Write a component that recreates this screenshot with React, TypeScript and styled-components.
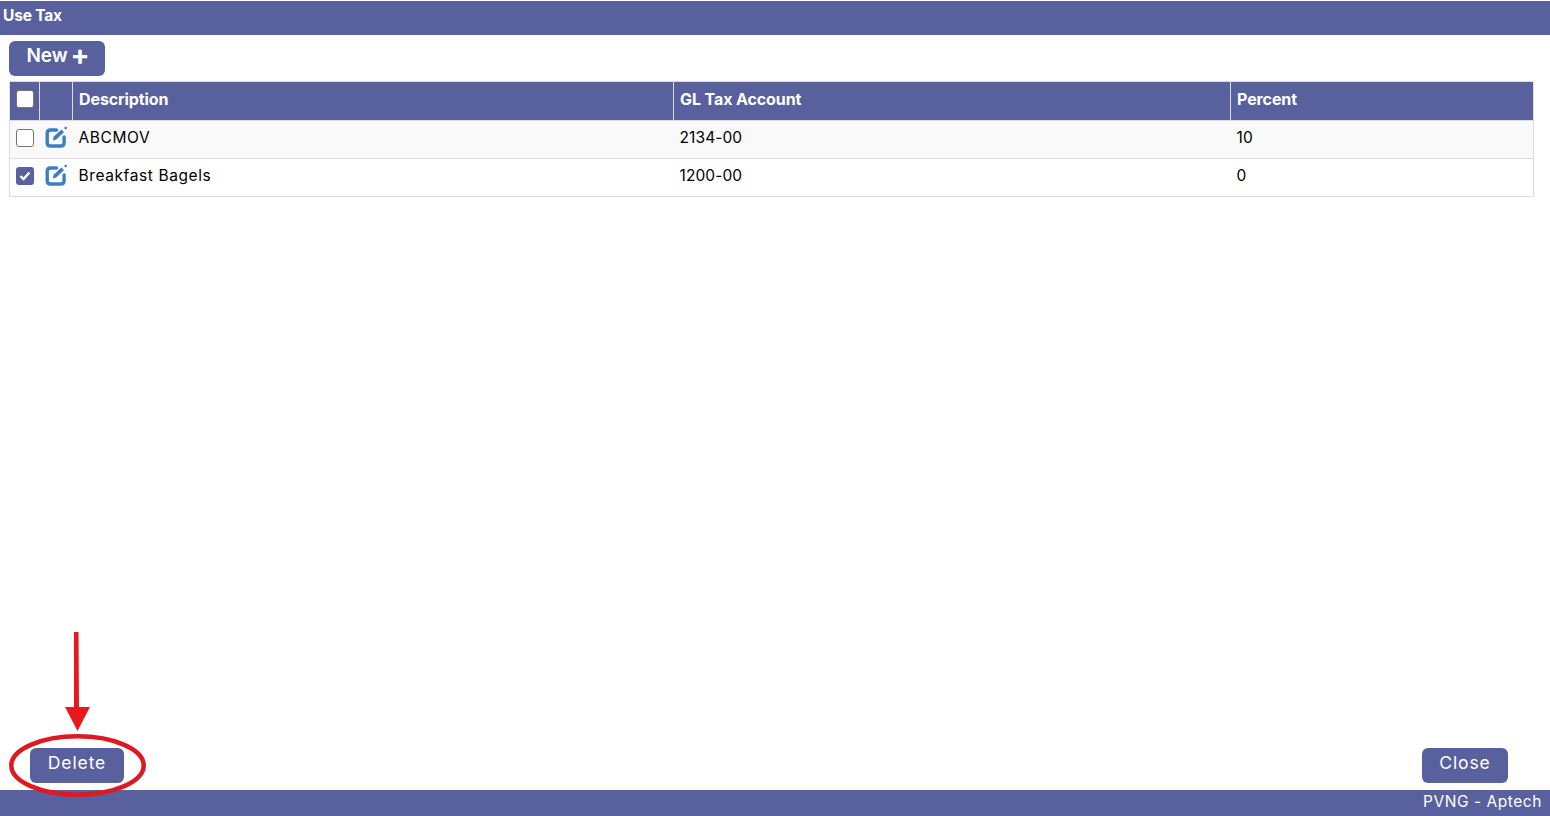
import { createGlobalStyle } from "styled-components";
import styled from "styled-components";

const PRIMARY = "#58619d";

interface ITax {
  description: string;
  account: string;
  percent: string;
  checked: boolean;
}

const taxes: ITax[] = [
  { description: "ABCMOV", account: "2134-00", percent: "10", checked: false },
  { description: "Breakfast Bagels", account: "1200-00", percent: "0", checked: true },
];

function EditIcon() {
  return (
    <svg width="24" height="22" viewBox="0 0 24 22" fill="none">
      <path
        d="M11.5 4H5.5C3.4 4 2.2 5.2 2.2 7.3V16.7C2.2 18.8 3.4 20 5.5 20H15.8C17.9 20 19.1 18.8 19.1 16.7V11"
        stroke="#3a80c1"
        strokeWidth="3.4"
        strokeLinecap="round"
      />
      <path d="M8.5 10.8L16.5 3.6L19 6.2L11.2 13.6L8 14.4Z" fill="#3a80c1" />
      <path d="M19.8 0.6L22.2 1.4L21.4 3.6L19.4 2.8Z" fill="#3a80c1" />
    </svg>
  );
}

function CheckBox({ checked }: { checked: boolean }) {
  return (
    <StyledBox $checked={checked}>
      {checked && (
        <svg width="12" height="10" viewBox="0 0 12 10" fill="none">
          <path d="M1.5 5L4.5 8L10.5 1.5" stroke="#fff" strokeWidth="2.4" />
        </svg>
      )}
    </StyledBox>
  );
}

function App() {
  return (
    <StyledPage>
      <GlobalStyle />
      <StyledTitleBar>Use Tax</StyledTitleBar>
      <StyledMain>
        <StyledNewButton>
          New <StyledPlus>+</StyledPlus>
        </StyledNewButton>
        <StyledTable>
          <colgroup>
            <col style={{ width: 30 }} />
            <col style={{ width: 33 }} />
            <col style={{ width: 601 }} />
            <col style={{ width: 557 }} />
            <col />
          </colgroup>
          <thead>
            <tr>
              <StyledTh>
                <StyledBoxCell>
                  <CheckBox checked={false} />
                </StyledBoxCell>
              </StyledTh>
              <StyledTh />
              <StyledTh>Description</StyledTh>
              <StyledTh>GL Tax Account</StyledTh>
              <StyledTh>Percent</StyledTh>
            </tr>
          </thead>
          <tbody>
            {taxes.map((each, index) => (
              <StyledRow key={index} $odd={index % 2 === 0}>
                <StyledTd>
                  <StyledBoxCell>
                    <CheckBox checked={each.checked} />
                  </StyledBoxCell>
                </StyledTd>
                <StyledIconTd>
                  <EditIcon />
                </StyledIconTd>
                <StyledTd>{each.description}</StyledTd>
                <StyledNumberTd>{each.account}</StyledNumberTd>
                <StyledNumberTd>{each.percent}</StyledNumberTd>
              </StyledRow>
            ))}
          </tbody>
        </StyledTable>
        <StyledActions>
          <StyledDeleteWrap>
            <StyledArrow width="30" height="102" viewBox="0 0 30 102">
              <path d="M11 1H15.5L16 76H27L14.5 100L2 76H11Z" fill="#e8191e" />
            </StyledArrow>
            <StyledRing width="140" height="66" viewBox="0 0 140 66" fill="none">
              <ellipse cx="69.5" cy="32.5" rx="66.2" ry="29.2" stroke="#dc1a22" strokeWidth="4.5" />
            </StyledRing>
            <StyledButton $width={94}>Delete</StyledButton>
          </StyledDeleteWrap>
          <StyledButton $width={86}>Close</StyledButton>
        </StyledActions>
      </StyledMain>
      <StyledFooter>PVNG - Aptech</StyledFooter>
    </StyledPage>
  );
}

export default App;

const GlobalStyle = createGlobalStyle`
  body {
    margin: 0;
    background: #fff;
    font-family: Inter, "Noto Sans", "Liberation Sans", sans-serif;
    color: #000;
  }
`;

const StyledPage = styled.div`
  height: 816px;
  padding-top: 1px;
  box-sizing: border-box;
  display: flex;
  flex-direction: column;
  overflow: hidden;
`;

const StyledTitleBar = styled.div`
  height: 34px;
  line-height: 30px;
  padding-left: 3px;
  background: ${PRIMARY};
  color: #fff;
  font-size: 15.5px;
  font-weight: 700;
  letter-spacing: -0.2px;
`;

const StyledMain = styled.div`
  flex: 1;
  display: flex;
  flex-direction: column;
  align-items: flex-start;
  padding: 6px 16px 7px 9px;
`;

const StyledButton = styled.button<{ $width: number }>`
  width: ${(props) => props.$width}px;
  height: 35px;
  padding: 0 0 7px;
  border: none;
  border-radius: 6px;
  background: ${PRIMARY};
  color: #fff;
  font-family: inherit;
  font-size: 17.5px;
  letter-spacing: 0.9px;
`;

const StyledNewButton = styled.button`
  width: 96px;
  height: 35px;
  padding: 0 0 6px 2px;
  border: none;
  border-radius: 6px;
  background: ${PRIMARY};
  color: #fff;
  font-family: inherit;
  font-size: 19px;
  font-weight: 600;
`;

const StyledPlus = styled.span`
  font-size: 28px;
  font-weight: 700;
  line-height: 20px;
  vertical-align: -3px;
  margin-left: -2px;
`;

const StyledTable = styled.table`
  width: 100%;
  margin-top: 5px;
  border-collapse: collapse;
  table-layout: fixed;
  border: 1px solid #ddd;
`;

const StyledTh = styled.th`
  height: 39px;
  box-sizing: border-box;
  padding: 0 6px 5px;
  background: ${PRIMARY};
  border-left: 1px solid #ddd;
  color: #fff;
  font-size: 16px;
  font-weight: 700;
  text-align: left;
  letter-spacing: -0.1px;
  &:first-child {
    padding: 0 0 4px;
    border-left: none;
  }
`;

const StyledRow = styled.tr<{ $odd: boolean }>`
  background: ${(props) => (props.$odd ? "#f9f9f9" : "#fff")};
  border-top: 1px solid #ddd;
`;

const StyledTd = styled.td`
  height: 38px;
  box-sizing: border-box;
  padding: 0 6px 4px;
  font-size: 15.5px;
  letter-spacing: 0.6px;
  &:first-child {
    padding: 0 0 2px;
  }
`;

const StyledNumberTd = styled(StyledTd)`
  letter-spacing: 0.1px;
`;

const StyledIconTd = styled.td`
  box-sizing: border-box;
  padding: 0 0 6px 5px;
  line-height: 0;
`;

const StyledBoxCell = styled.div`
  display: flex;
  justify-content: center;
  padding-left: 1px;
  padding-bottom: 1px;
`;

const StyledBox = styled.span<{ $checked: boolean }>`
  width: 18px;
  height: 18px;
  box-sizing: border-box;
  display: flex;
  align-items: center;
  justify-content: center;
  border-radius: 3px;
  border: ${(props) => (props.$checked ? "none" : "1.5px solid #767676")};
  background: ${(props) => (props.$checked ? PRIMARY : "#fff")};
`;

const StyledActions = styled.div`
  width: 100%;
  margin-top: auto;
  display: flex;
  justify-content: space-between;
  padding: 0 26px 0 21px;
  box-sizing: border-box;
`;

const StyledDeleteWrap = styled.div`
  position: relative;
  display: flex;
`;

const StyledArrow = styled.svg`
  position: absolute;
  left: 33px;
  top: -117px;
`;

const StyledRing = styled.svg`
  position: absolute;
  left: -22px;
  top: -15px;
  z-index: 2;
  pointer-events: none;
`;

const StyledFooter = styled.div`
  height: 26px;
  line-height: 24px;
  padding-right: 8px;
  background: ${PRIMARY};
  color: #fff;
  font-size: 15.5px;
  letter-spacing: 0.55px;
  text-align: right;
`;
